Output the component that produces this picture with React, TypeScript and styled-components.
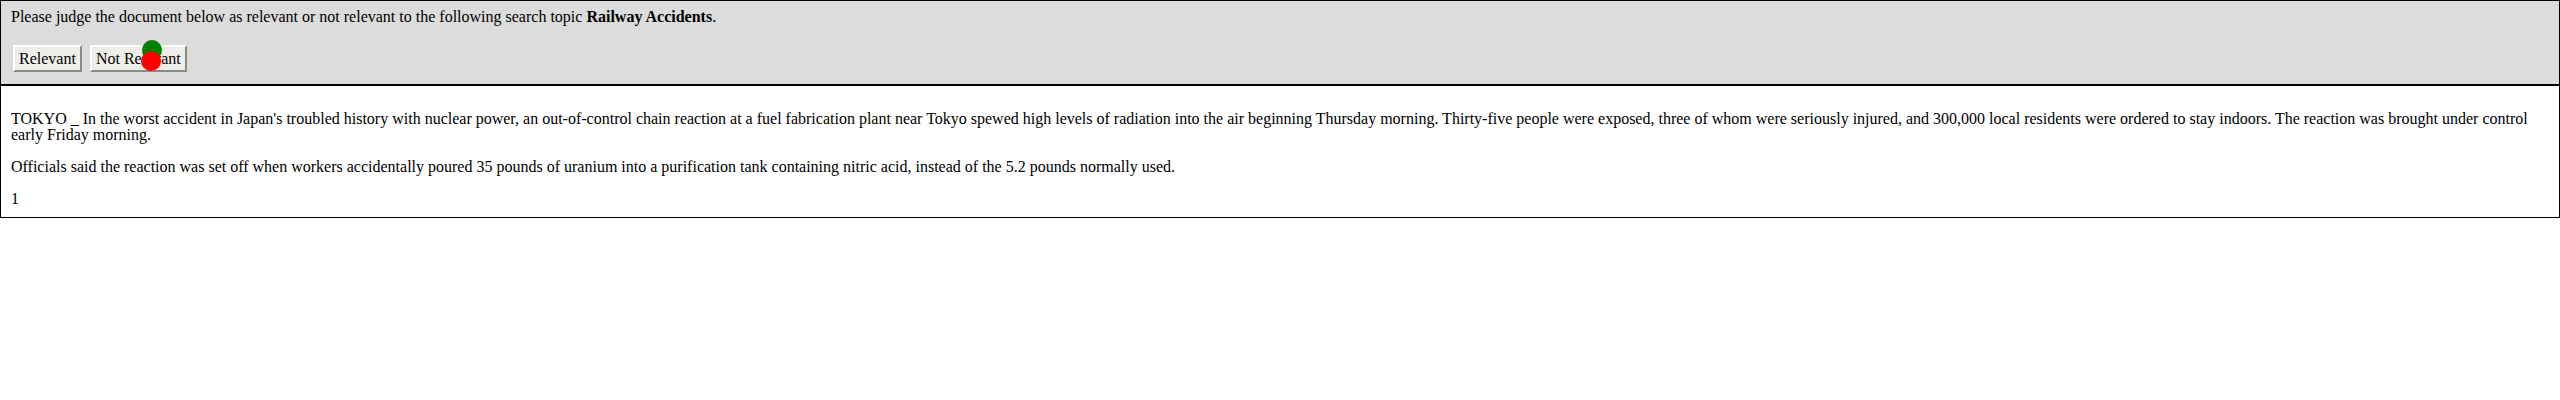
import styled, { createGlobalStyle } from "styled-components";

const GlobalStyle = createGlobalStyle`
  html, body {
    margin: 0;
    padding: 0;
    background: #ffffff;
  }
  body {
    font-family: "Liberation Serif", "Times New Roman", serif;
    font-size: 16px;
    color: #000000;
  }
`;

const Page = styled.div`
  width: 2560px;
`;

const JudgeBar = styled.div`
  position: relative;
  background: #dcdcdc;
  border: 1px solid #000000;
  padding: 7px 10px 12px;
`;

const Prompt = styled.div`
  line-height: 18px;
`;

const ButtonRow = styled.div`
  display: flex;
  gap: 8px;
  margin-top: 19px;
  padding-left: 2px;
`;

const JudgeButton = styled.button`
  box-sizing: border-box;
  height: 27px;
  padding: 0 4px;
  font-family: "Liberation Serif", "Times New Roman", serif;
  font-size: 16px;
  color: #000000;
  background: #efede8;
  border: 2px solid;
  border-color: #ffffff #8a8a8a #8a8a8a #ffffff;
  border-radius: 0;
  cursor: pointer;
`;

const Dot = styled.span<{ color: string; left: number; top: number }>`
  position: absolute;
  left: ${({ left }) => left}px;
  top: ${({ top }) => top}px;
  width: 20px;
  height: 20px;
  border-radius: 50%;
  background: ${({ color }) => color};
`;

const DocumentBox = styled.div`
  border: 1px solid #000000;
  padding: 9px 10px 0;
`;

const Para = styled.p`
  margin: 16px 0;
  line-height: 16px;
`;

const PageNumber = styled.div`
  margin: 16px 0 10px;
  line-height: 16px;
`;

export default function App() {
  return (
    <Page>
      <GlobalStyle />
      <JudgeBar>
        <Prompt>
          Please judge the document below as relevant or not relevant to the
          following search topic <b>Railway Accidents</b>.
        </Prompt>
        <ButtonRow>
          <JudgeButton>Relevant</JudgeButton>
          <JudgeButton>Not Relevant</JudgeButton>
        </ButtonRow>
        <Dot color="#008000" left={141} top={39} />
        <Dot color="#ff0000" left={140} top={50} />
      </JudgeBar>
      <DocumentBox>
        <Para>
          TOKYO _ In the worst accident in Japan's troubled history with nuclear
          power, an out-of-control chain reaction at a fuel fabrication plant
          near Tokyo spewed high levels of radiation into the air beginning
          Thursday morning. Thirty-five people were exposed, three of whom were
          seriously injured, and 300,000 local residents were ordered to stay
          indoors. The reaction was brought under control early Friday morning.
        </Para>
        <Para>
          Officials said the reaction was set off when workers accidentally
          poured 35 pounds of uranium into a purification tank containing nitric
          acid, instead of the 5.2 pounds normally used.
        </Para>
        <PageNumber>1</PageNumber>
      </DocumentBox>
    </Page>
  );
}
